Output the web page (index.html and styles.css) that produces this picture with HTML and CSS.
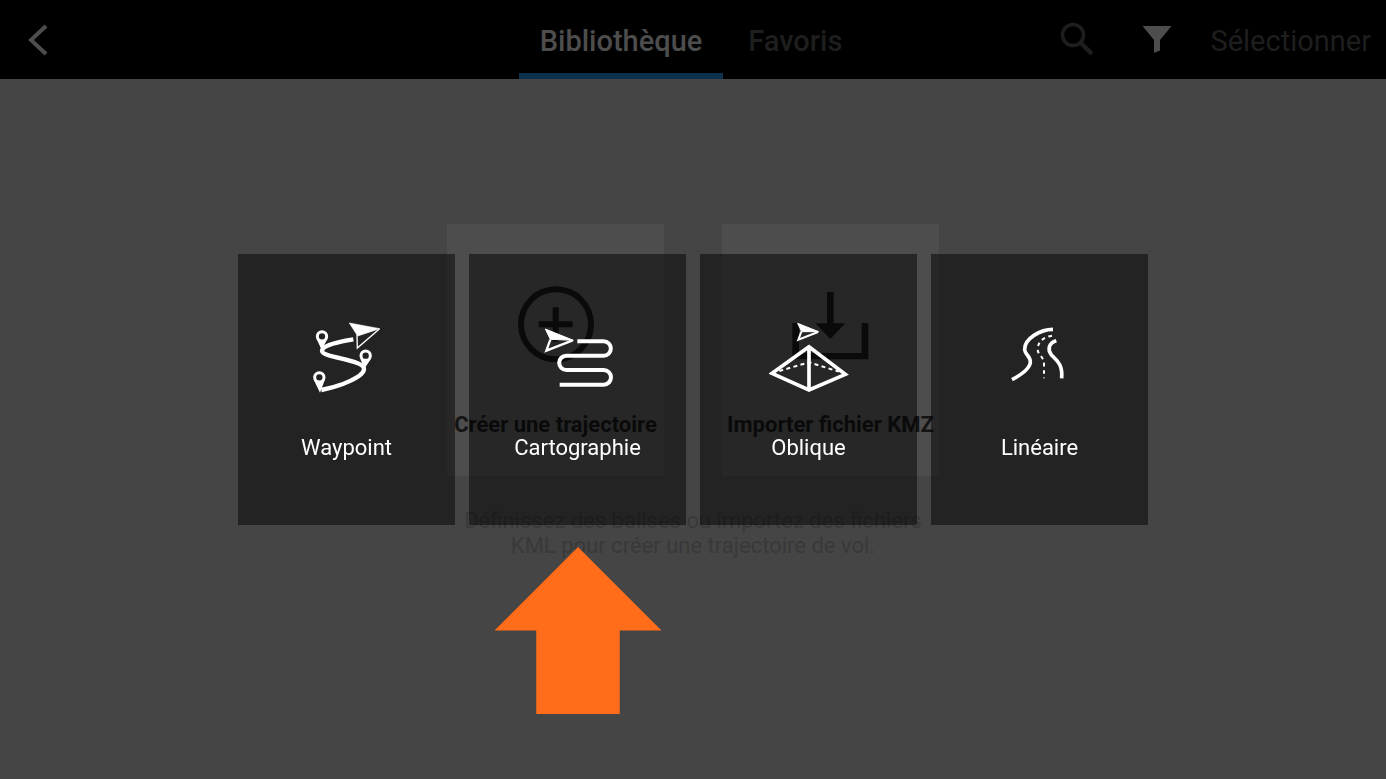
FILE: index.html
```html
<!DOCTYPE html>
<html lang="fr">
<head>
<meta charset="utf-8">
<meta name="viewport" content="width=device-width, initial-scale=1">
<title>Bibliothèque</title>
<link rel="stylesheet" href="styles.css">
</head>
<body>
<header class="topbar">
  <button class="icon-button back" type="button" aria-label="Retour">
    <svg class="icon" viewBox="0 0 40 40"><path d="M26 6 11 20l15 14" fill="none" stroke="currentColor" stroke-width="4"/></svg>
  </button>
  <nav class="tabs">
    <a class="tab tab-active" href="#bibliotheque">Bibliothèque</a>
    <a class="tab" href="#favoris">Favoris</a>
  </nav>
  <div class="actions">
    <div class="tools">
      <button class="icon-button muted" type="button" aria-label="Rechercher">
        <svg class="icon" viewBox="0 0 40 40"><circle cx="16" cy="15" r="10.500" fill="none" stroke="currentColor" stroke-width="3.500"/><path d="M23.500 22.500 35 34" fill="none" stroke="currentColor" stroke-width="4.500"/></svg>
      </button>
      <button class="icon-button" type="button" aria-label="Filtrer">
        <svg class="icon" viewBox="0 0 40 40"><path d="M5.500 6h29L23 20v10.500L17 33V20z" fill="currentColor"/></svg>
      </button>
    </div>
    <button class="select-button" type="button">Sélectionner</button>
  </div>
</header>

<main class="library">
  <div class="cards">
    <button class="card" type="button">
      <svg class="glyph" viewBox="227 207 240 240" fill="none" stroke="currentColor" stroke-width="18"><circle cx="347" cy="328" r="105"/><path d="M295 328h102M346 277v103"/></svg>
      <span class="card-label">Créer une trajectoire</span>
    </button>
    <button class="card" type="button">
      <svg class="glyph" viewBox="287 207 240 240" fill="currentColor"><path d="M395 231h20v94h35l-45 47-45-47h35z"/><path d="M291 324h20v90h188v-90h20v109H291z"/></svg>
      <span class="card-label">Importer fichier KMZ</span>
    </button>
  </div>
  <p class="hint">Définissez des balises ou importez des fichiers KML pour créer une trajectoire de vol.</p>
</main>

<div class="overlay" role="dialog" aria-label="Type de trajectoire">
  <div class="tiles">
    <button class="tile" type="button">
      <svg class="glyph" viewBox="51 51 240 240" fill="none" stroke="currentColor">
        <path d="M190 118C150 124 97 136 96 152C95 174 222 178 222 207C222 230 150 260 94 270" stroke-width="13"/>
        <g stroke-width="9"><circle cx="96" cy="109" r="14"/><circle cx="227" cy="167" r="14"/><circle cx="88" cy="232" r="14"/></g>
        <path d="M80 117 95 150 112 117 96 126zM211 176 223 206 243 176 227 184zM72 241 90 278 104 241 88 249z" fill="currentColor" stroke="none"/>
        <path d="M178 69 269 86 203 108z" fill="currentColor" stroke-width="2"/><path d="M201 104 202 144 268 87" stroke-width="4"/>
      </svg>
      <span class="tile-label">Waypoint</span>
    </button>
    <div class="tile-slot">
      <button class="tile" type="button">
        <svg class="glyph" viewBox="294 306 240 240" fill="none" stroke="currentColor">
          <path d="M412 379H491a21 21 0 0 1 0 43H379a21 21 0 0 0 0 43H491a22 22 0 0 1 0 44H359" stroke-width="12"/>
          <path d="M316 342 400 376 331 373z" fill="currentColor" stroke-width="3"/><path d="M331 374 319 407 398 376" stroke-width="7"/>
        </svg>
        <span class="tile-label">Cartographie</span>
      </button>
      <svg class="pointer" viewBox="0 0 168 168" aria-hidden="true"><path d="M84 0 168 84H126V168H42V84H0z"/></svg>
    </div>
    <button class="tile" type="button">
      <svg class="glyph" viewBox="222 306 240 240" fill="none" stroke="currentColor">
        <path d="M342 395 231 475 342 525 451 478zM342 395V524" stroke-width="11"/>
        <path d="M253 468 342 442 432 470" stroke-width="6" stroke-dasharray="12 10"/>
        <path d="M308 325 371 350 320 350z" fill="currentColor" stroke-width="3"/><path d="M319 350 310 374 369 351" stroke-width="6"/>
      </svg>
      <span class="tile-label">Oblique</span>
    </button>
    <button class="tile" type="button">
      <svg class="glyph" viewBox="60 51 240 240" fill="none" stroke="currentColor">
        <path d="M219 88C182 88 132 116 134 149C136 166 153 169 151 187C149 207 120 226 96 239M229 122C207 128 202 147 213 163C226 179 249 188 245 235" stroke-width="11"/>
        <path d="M216 107C188 112 173 127 173 148C174 167 192 169 192 193V235" stroke-width="6" stroke-dasharray="11 11"/>
      </svg>
      <span class="tile-label">Linéaire</span>
    </button>
  </div>
</div>
</body>
</html>
```
FILE: styles.css
```css
* { box-sizing: border-box; }

body {
  margin: 0;
  min-height: 100vh;
  background: #454545;
  font-family: Roboto, "Liberation Sans", sans-serif;
}

button {
  margin: 0;
  padding: 0;
  border: 0;
  background: none;
  color: inherit;
  font: inherit;
}

a { color: inherit; text-decoration: none; }
svg { display: block; }

.topbar {
  display: grid;
  grid-template-columns: 1fr auto 1fr;
  height: 79px;
  background: #000;
  color: #4d4d4d;
  font-size: 29px;
}

.icon { width: 40px; height: 40px; }
.icon-button { display: grid; place-items: center; }
.back { justify-self: start; padding-left: 20px; }
.muted, .select-button { color: #1e1e1e; }

.tabs { display: flex; }

.tab {
  display: grid;
  place-items: center;
  min-width: 144px;
  padding: 8px 21px 0;
  border-bottom: 6px solid transparent;
  color: #1e1e1e;
  font-weight: 500;
}

.tab-active {
  min-width: 204px;
  border-bottom-color: #0b314c;
  color: #4d4d4d;
}

.actions {
  display: flex;
  justify-content: flex-end;
  align-items: center;
  gap: 33px;
  padding-right: 15px;
}

.tools { display: flex; gap: 40px; }
.select-button { padding-top: 2px; }

.library {
  display: flex;
  flex-direction: column;
  align-items: center;
  padding-top: 145px;
  font-size: 22px;
}

.cards { display: flex; gap: 58px; }

.card {
  display: flex;
  flex-direction: column;
  align-items: center;
  gap: 48px;
  width: 217px;
  padding: 60px 0 38px;
  background: #4d4d4d;
  color: #141414;
  font-weight: 700;
  line-height: 26px;
  white-space: nowrap;
}

.glyph { width: 80px; height: 80px; }

.hint {
  max-width: 464px;
  margin: 32px 0 0;
  color: #393939;
  line-height: 25px;
  text-align: center;
}

.overlay {
  position: fixed;
  inset: 0;
  display: grid;
  place-items: center;
}

.tiles { display: flex; gap: 14px; }
.tile-slot { position: relative; }

.tile {
  display: flex;
  flex-direction: column;
  align-items: center;
  gap: 38px;
  width: 217px;
  padding: 63px 0 64px;
  background: rgba(0, 0, 0, 0.49);
  color: #fff;
  font-size: 22px;
  line-height: 26px;
}

.pointer {
  position: absolute;
  top: calc(100% + 22px);
  left: 50%;
  width: 167px;
  height: 167px;
  transform: translateX(-50%);
  fill: #ff6d1b;
}
```
